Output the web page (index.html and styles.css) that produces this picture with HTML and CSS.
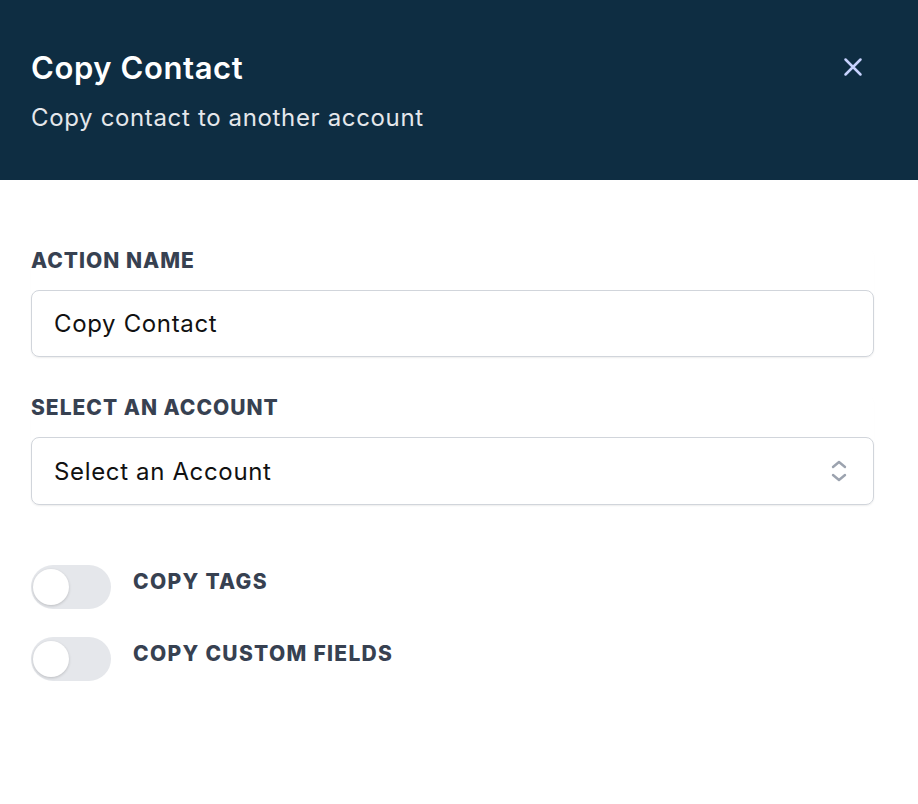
FILE: index.html
```html
<!DOCTYPE html>
<html>
<head>
<meta charset="utf-8">
<link rel="stylesheet" href="styles.css">
</head>
<body>
<div class="panel">
  <header class="head">
    <div class="head-text">
      <h1 class="title">Copy Contact</h1>
      <p class="subtitle">Copy contact to another account</p>
    </div>
    <button class="close" aria-label="Close">
      <svg width="30" height="30" viewBox="0 0 24 24" fill="none" stroke="currentColor" stroke-width="2" stroke-linecap="round"><path d="M6 6l12 12M18 6L6 18"/></svg>
    </button>
  </header>
  <main class="body">
    <div class="field">
      <label class="label">Action Name</label>
      <div class="input">Copy Contact</div>
    </div>
    <div class="field">
      <label class="label">Select an Account</label>
      <div class="input select">
        <span>Select an Account</span>
        <svg class="chev" width="20" height="28" viewBox="0 0 20 28" fill="none" stroke="#9ca3af" stroke-width="2.4" stroke-linecap="round" stroke-linejoin="round"><path d="M4 10l6-5 6 5M4 18l6 5 6-5"/></svg>
      </div>
    </div>
    <div class="toggles">
      <div class="toggle-row">
        <span class="switch"><span class="knob"></span></span>
        <span class="toggle-label">Copy Tags</span>
      </div>
      <div class="toggle-row">
        <span class="switch"><span class="knob"></span></span>
        <span class="toggle-label">Copy Custom Fields</span>
      </div>
    </div>
  </main>
</div>
</body>
</html>
```
FILE: styles.css
```css
* { box-sizing: border-box; }
html, body { margin: 0; padding: 0; background: #fff; }
body { font-family: Inter, "Noto Sans", sans-serif; width: 918px; height: 804px; overflow: hidden; }
.head {
  background: #0e2d42;
  height: 180px;
  padding: 48px 50px 0 31px;
  display: flex;
  justify-content: space-between;
  align-items: flex-start;
}
.title { margin: 0; color: #fff; font-size: 31px; font-weight: 600; line-height: 40px; letter-spacing: 0.6px; }
.subtitle { margin: 15px 0 0; color: #e5e7eb; font-size: 24px; line-height: 30px; letter-spacing: 0.65px; }
.close { background: none; border: 0; padding: 0; color: #c7d2fe; margin-top: 4px; cursor: pointer; display: flex; }
.body { padding: 67px 44px 0 31px; }
.field { margin-bottom: 37px; box-shadow: 0 1px 3px rgba(0,0,0,0.02); border-radius: 10px; }
.label { display: block; color: #374151; font-size: 21px; font-weight: 800; text-transform: uppercase; letter-spacing: 1px; line-height: 28px; margin-bottom: 15px; }
.input {
  height: 67px;
  border: 1px solid #d1d5db;
  border-radius: 8px;
  box-shadow: 0 1px 2px rgba(0,0,0,0.06);
  padding: 0 22px;
  display: flex; align-items: center; justify-content: space-between;
  font-size: 24px; color: #111; letter-spacing: 0.65px;
}
.select { height: 68px; padding-right: 24px; }
.toggles { padding-top: 23px; display: flex; flex-direction: column; gap: 28px; }
.toggle-row { display: flex; align-items: center; gap: 22px; }
.switch { width: 80px; height: 44px; border-radius: 22px; background: #e5e7eb; position: relative; display: block; flex: none; }
.knob { position: absolute; left: 2px; top: 4px; width: 36px; height: 36px; border-radius: 50%; background: #fff; box-shadow: 0 1px 3px rgba(0,0,0,0.18); }
.toggle-label { color: #374151; font-size: 21px; font-weight: 800; text-transform: uppercase; letter-spacing: 1.3px; margin-top: -12px; }
```
